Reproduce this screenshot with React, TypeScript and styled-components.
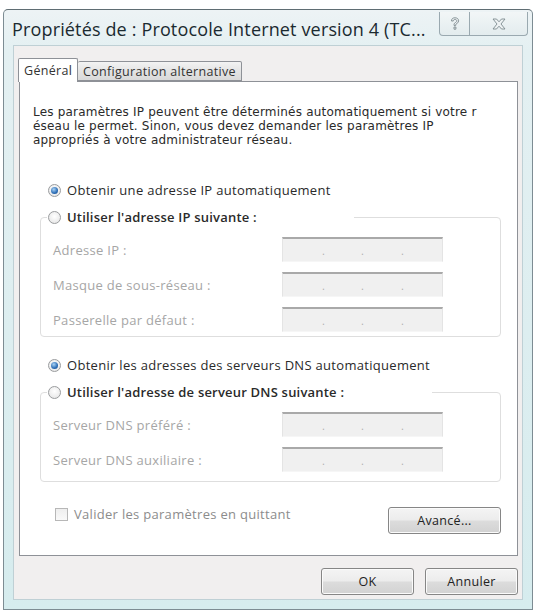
import React from "react";
import styled, { createGlobalStyle } from "styled-components";

const GlobalStyle = createGlobalStyle`
  html, body {
    margin: 0;
    padding: 0;
    background: #ffffff;
  }
  body {
    font-family: "Open Sans", "Noto Sans", sans-serif;
    color: #222;
  }
`;

const Window = styled.div`
  margin: 9px 0 0 3px;
  width: 530px;
  height: 601px;
  box-sizing: border-box;
  border: 1px solid #7d8c93;
  border-top-color: #5f6d73;
  border-radius: 5px 5px 0 0;
  background: linear-gradient(#edf3f5 0px, #e4f0f2 40px, #d6ecee 100%);
  padding: 0 9px 9px 9px;
  display: flex;
  flex-direction: column;
`;

const TitleBar = styled.div`
  height: 35px;
  margin-right: -5px;
  display: flex;
  align-items: flex-start;
  justify-content: space-between;
`;

const Title = styled.div`
  padding: 8px 0 0 0;
  margin-left: -1px;
  font-size: 18px;
  line-height: 22px;
  letter-spacing: 0.15px;
  color: #1b2a30;
  white-space: nowrap;
`;

const Caption = styled.div`
  display: flex;
  margin-top: 2px;
  height: 23px;
  border: 1px solid #9aa9b0;
  border-top: none;
  border-radius: 0 0 4px 4px;
  background: linear-gradient(#f2f6f7, #e3ecee);
  overflow: hidden;
`;

const CaptionButton = styled.div<{ $w: number }>`
  width: ${(p) => p.$w}px;
  display: flex;
  align-items: center;
  justify-content: center;
  & + & {
    border-left: 1px solid #9aa9b0;
  }
`;

const Content = styled.div`
  flex: 1;
  border: 1px solid #bfd0d5;
  background: #f1efef;
  padding: 12px 4px 0 4px;
  display: flex;
  flex-direction: column;
`;

const Tabs = styled.div`
  display: flex;
  align-items: flex-end;
  height: 23px;
  position: relative;
  z-index: 1;
`;

const Tab = styled.div<{ $active?: boolean }>`
  box-sizing: border-box;
  height: ${(p) => (p.$active ? 24 : 20)}px;
  margin-bottom: ${(p) => (p.$active ? -1 : 0)}px;
  padding: 0 5px;
  display: flex;
  align-items: center;
  font-size: 12.5px;
  letter-spacing: 0.3px;
  color: #333;
  border: 1px solid #8e9197;
  border-bottom: ${(p) => (p.$active ? "none" : "1px solid #8e9197")};
  border-left: ${(p) => (p.$active ? "1px solid #8e9197" : "none")};
  border-radius: 2px 2px 0 0;
  background: ${(p) =>
    p.$active ? "#ffffff" : "linear-gradient(#f3f3f3, #e4e4e4 50%, #d9d9d9)"};
`;

const Panel = styled.div`
  box-sizing: border-box;
  height: 475px;
  margin-left: 1px;
  border: 1px solid #8e9197;
  background: #ffffff;
  display: flex;
  flex-direction: column;
  padding: 0 16px 0 0;
`;

const Intro = styled.p`
  margin: 23px 0 0 13px;
  font-family: "DejaVu Sans", "Open Sans", sans-serif;
  font-size: 12px;
  line-height: 14px;
  letter-spacing: 0.2px;
  white-space: nowrap;
  color: #2a2a2a;
`;

const OptionRow = styled.label<{ $top: number }>`
  display: flex;
  align-items: center;
  gap: 6px;
  height: 18px;
  margin: ${(p) => p.$top}px 0 0 28px;
  font-size: 13px;
  letter-spacing: 0.3px;
  color: #2a2a2a;
`;

const Radio = styled.span<{ $checked?: boolean }>`
  box-sizing: border-box;
  flex: none;
  width: 13px;
  height: 13px;
  border-radius: 50%;
  border: 1px solid #9a9c9e;
  background: radial-gradient(circle at 50% 40%, #ffffff, #e2e2e2);
  display: flex;
  align-items: center;
  justify-content: center;
  &::after {
    content: "";
    width: 7px;
    height: 7px;
    border-radius: 50%;
    display: ${(p) => (p.$checked ? "block" : "none")};
    background: radial-gradient(circle at 40% 35%, #a9d3f5, #2b6cb5 60%, #1a4a86);
  }
`;

const Group = styled.fieldset`
  margin: 9px 0 0 20px;
  padding: 0 0 4px 12px;
  border: 1px solid #dedede;
  border-radius: 4px;
  display: flex;
  flex-direction: column;
  gap: 10px;
  min-width: 0;
`;

const GroupLegend = styled.legend<{ $w: number }>`
  box-sizing: border-box;
  width: ${(p) => p.$w}px;
  margin-left: -6px;
  padding: 0 3px 0 1px;
  height: 18px;
  display: flex;
  align-items: center;
  gap: 6px;
  font-size: 13px;
  letter-spacing: 0.2px;
  font-weight: 600;
  color: #2a2a2a;
  white-space: nowrap;
`;

const FieldRow = styled.div<{ $first?: boolean; $last?: boolean }>`
  display: flex;
  align-items: center;
  margin-top: ${(p) => (p.$first ? 11 : 0)}px;
  margin-bottom: ${(p) => (p.$last ? 5 : 0)}px;
`;

const FieldLabel = styled.span`
  width: 229px;
  font-size: 13px;
  letter-spacing: 0.3px;
  color: #a6a6a6;
`;

const IpField = styled.div`
  box-sizing: border-box;
  width: 161px;
  height: 25px;
  background: #f0f0f0;
  border-top: 2px solid #a9a9a9;
  border-left: 1px solid #e4e4e4;
  border-right: 1px solid #e4e4e4;
  border-bottom: 1px solid #f6f6f6;
  display: grid;
  grid-template-columns: 40px 39px 40px;
  padding-left: 2px;
  align-items: center;
  font-size: 11px;
  color: #b0b0b0;
  span {
    text-align: right;
  }
`;

const Footer = styled.div`
  display: flex;
  align-items: flex-start;
  justify-content: space-between;
  margin: 25px 0 0 35px;
`;

const CheckRow = styled.label`
  display: flex;
  align-items: center;
  gap: 6px;
  height: 14px;
  font-size: 13px;
  letter-spacing: 0.3px;
  color: #8c8c8c;
`;

const Checkbox = styled.span`
  box-sizing: border-box;
  width: 13px;
  height: 13px;
  border: 1px solid #b7b7b7;
  background: linear-gradient(#eeeeee, #f9f9f9);
`;

const Button = styled.button<{ $w: number }>`
  box-sizing: border-box;
  width: ${(p) => p.$w}px;
  height: 27px;
  padding: 0;
  border: 1px solid #868686;
  border-radius: 3px;
  background: linear-gradient(#f4f4f4 0%, #ececec 48%, #dcdcdc 52%, #d2d2d2 100%);
  box-shadow: inset 0 0 0 1px #fbfbfb;
  font-family: "Open Sans", "Noto Sans", sans-serif;
  font-size: 12.5px;
  letter-spacing: 0.3px;
  color: #222;
`;

const DialogButtons = styled.div`
  display: flex;
  justify-content: flex-end;
  gap: 11px;
  margin-top: 12px;
`;

const HelpIcon = () => (
  <svg width="10" height="14" viewBox="0 0 10 14">
    <path
      d="M1.5 4 C1.5 1.5 3 0.8 5 0.8 C7.3 0.8 8.6 2 8.6 3.8 C8.6 5.6 7.2 6.2 6.2 6.9 C5.8 7.2 5.8 7.6 5.8 8.4 L4 8.4 C4 7.2 4.1 6.5 5 5.8 C6 5.1 6.8 4.8 6.8 3.9 C6.8 3 6.1 2.5 5 2.5 C3.9 2.5 3.3 3.1 3.3 4 Z M4 10 L5.9 10 L5.9 12.2 L4 12.2 Z"
      fill="#eef2f3"
      stroke="#7d8a8f"
      strokeWidth="0.9"
    />
  </svg>
);

const CloseIcon = () => (
  <svg width="14" height="12" viewBox="0 0 14 12">
    <path
      d="M1 1 L4.5 1 L7 3.8 L9.5 1 L13 1 L9 6 L13 11 L9.5 11 L7 8.2 L4.5 11 L1 11 L5 6 Z"
      fill="#eef2f3"
      stroke="#7d8a8f"
      strokeWidth="0.9"
    />
  </svg>
);

const Dots = () => (
  <IpField>
    <span>.</span>
    <span>.</span>
    <span>.</span>
  </IpField>
);

export default function App() {
  return (
    <>
      <GlobalStyle />
      <Window>
        <TitleBar>
          <Title>Propriétés de : Protocole Internet version 4 (TC...</Title>
          <Caption>
            <CaptionButton $w={29}>
              <HelpIcon />
            </CaptionButton>
            <CaptionButton $w={57}>
              <CloseIcon />
            </CaptionButton>
          </Caption>
        </TitleBar>
        <Content>
          <Tabs>
            <Tab $active>Général</Tab>
            <Tab>Configuration alternative</Tab>
          </Tabs>
          <Panel>
            <Intro>
              Les paramètres IP peuvent être déterminés automatiquement si votre r
              <br />
              éseau le permet. Sinon, vous devez demander les paramètres IP
              <br />
              appropriés à votre administrateur réseau.
            </Intro>
            <OptionRow $top={34}>
              <Radio $checked />
              Obtenir une adresse IP automatiquement
            </OptionRow>
            <Group>
              <GroupLegend $w={307}>
                <Radio />
                Utiliser l'adresse IP suivante :
              </GroupLegend>
              <FieldRow $first>
                <FieldLabel>Adresse IP :</FieldLabel>
                <Dots />
              </FieldRow>
              <FieldRow>
                <FieldLabel>Masque de sous-réseau :</FieldLabel>
                <Dots />
              </FieldRow>
              <FieldRow>
                <FieldLabel>Passerelle par défaut :</FieldLabel>
                <Dots />
              </FieldRow>
            </Group>
            <OptionRow $top={19}>
              <Radio $checked />
              Obtenir les adresses des serveurs DNS automatiquement
            </OptionRow>
            <Group>
              <GroupLegend $w={385}>
                <Radio />
                Utiliser l'adresse de serveur DNS suivante :
              </GroupLegend>
              <FieldRow $first>
                <FieldLabel>Serveur DNS préféré :</FieldLabel>
                <Dots />
              </FieldRow>
              <FieldRow $last>
                <FieldLabel>Serveur DNS auxiliaire :</FieldLabel>
                <Dots />
              </FieldRow>
            </Group>
            <Footer>
              <CheckRow>
                <Checkbox />
                Valider les paramètres en quittant
              </CheckRow>
              <Button $w={113}>Avancé...</Button>
            </Footer>
          </Panel>
          <DialogButtons>
            <Button $w={93}>OK</Button>
            <Button $w={93}>Annuler</Button>
          </DialogButtons>
        </Content>
      </Window>
    </>
  );
}
